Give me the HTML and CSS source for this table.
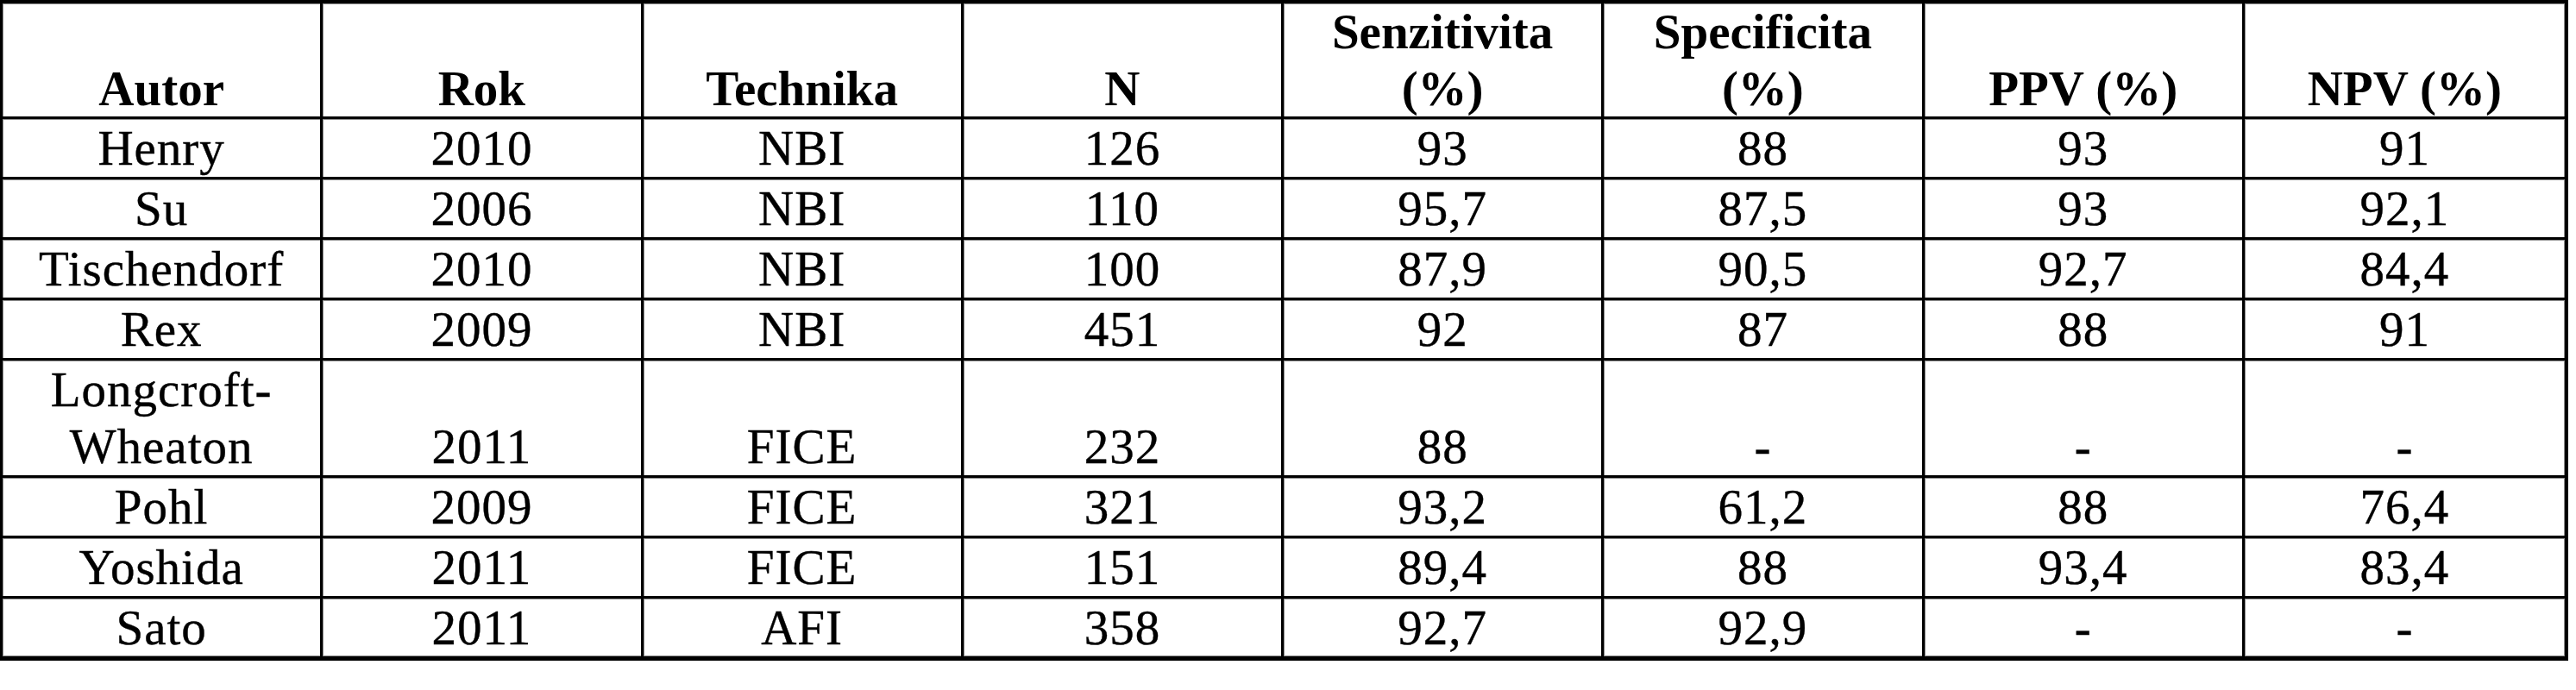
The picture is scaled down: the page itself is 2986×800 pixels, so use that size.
FILE: index.html
```html
<!DOCTYPE html>
<html lang="cs">
<head>
<meta charset="utf-8">
<title>Tabulka</title>
<link rel="stylesheet" href="styles.css">
</head>
<body>
<table class="data">
  <thead>
    <tr class="head">
      <th>Autor</th>
      <th>Rok</th>
      <th>Technika</th>
      <th>N</th>
      <th>Senzitivita<br>(%)</th>
      <th>Specificita<br>(%)</th>
      <th>PPV (%)</th>
      <th>NPV (%)</th>
    </tr>
  </thead>
  <tbody>
    <tr><td>Henry</td><td>2010</td><td>NBI</td><td>126</td><td>93</td><td>88</td><td>93</td><td>91</td></tr>
    <tr><td>Su</td><td>2006</td><td>NBI</td><td>110</td><td>95,7</td><td>87,5</td><td>93</td><td>92,1</td></tr>
    <tr><td>Tischendorf</td><td>2010</td><td>NBI</td><td>100</td><td>87,9</td><td>90,5</td><td>92,7</td><td>84,4</td></tr>
    <tr><td>Rex</td><td>2009</td><td>NBI</td><td>451</td><td>92</td><td>87</td><td>88</td><td>91</td></tr>
    <tr><td>Longcroft-<br>Wheaton</td><td>2011</td><td>FICE</td><td>232</td><td>88</td><td>-</td><td>-</td><td>-</td></tr>
    <tr><td>Pohl</td><td>2009</td><td>FICE</td><td>321</td><td>93,2</td><td>61,2</td><td>88</td><td>76,4</td></tr>
    <tr><td>Yoshida</td><td>2011</td><td>FICE</td><td>151</td><td>89,4</td><td>88</td><td>93,4</td><td>83,4</td></tr>
    <tr><td>Sato</td><td>2011</td><td>AFI</td><td>358</td><td>92,7</td><td>92,9</td><td>-</td><td>-</td></tr>
  </tbody>
</table>
</body>
</html>
```

FILE: styles.css
```css
html, body {
  margin: 0;
  padding: 0;
  background: #ffffff;
}

.data {
  width: 2977px;
  table-layout: fixed;
  border-collapse: separate;
  border-spacing: 0;
  border-style: solid;
  border-color: #000000;
  border-width: 4px 4px 5px 3px;
  font-family: "Liberation Serif", "Times New Roman", serif;
  font-size: 57px;
  color: #000000;
}

.data th,
.data td {
  padding: 1px 0 0 0;
  text-align: center;
  vertical-align: bottom;
  line-height: 66px;
  border-right: 3px solid #000000;
  border-bottom: 3px solid #000000;
  box-shadow: inset 1px 1px 0 #8c8c8c;
  overflow: hidden;
}

.data td {
  letter-spacing: 1px;
  -webkit-text-stroke: 0.4px #000000;
}

.data th {
  font-weight: bold;
  padding: 0;
  line-height: 65.5px;
}

.data tr > :last-child {
  border-right: none;
  box-shadow: inset 1px 1px 0 #8c8c8c, inset -1px 0 0 #8c8c8c;
}

.data tbody tr:last-child td {
  border-bottom: none;
  box-shadow: inset 1px 1px 0 #8c8c8c, inset 0 -1px 0 #8c8c8c;
}

.data tbody tr:last-child td:last-child {
  box-shadow: inset 1px 1px 0 #8c8c8c, inset -1px -1px 0 #8c8c8c;
}
```
